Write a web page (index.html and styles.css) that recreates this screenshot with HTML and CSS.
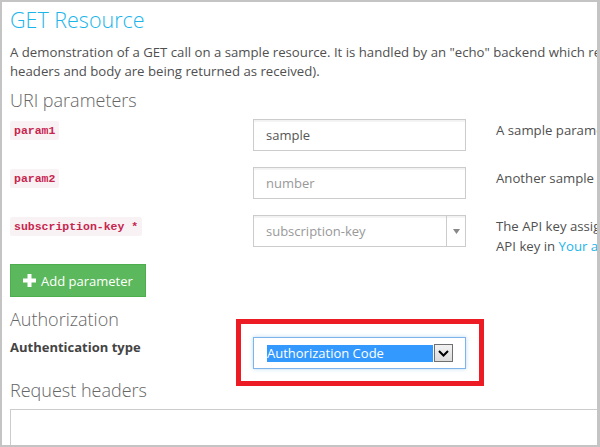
FILE: index.html
```html
<!DOCTYPE html>
<html>
<head>
<meta charset="utf-8">
<link rel="stylesheet" href="styles.css">
</head>
<body>
<div class="frame">
  <div class="content">
    <h1 class="title">GET Resource</h1>
    <p class="intro">A demonstration of a GET call on a sample resource. It is handled by an "echo" backend which returns a response equal to the request (the supplied<br>headers and body are being returned as received).</p>

    <h2 class="section uri-title">URI parameters</h2>
    <div class="params">
      <div class="label"><code>param1</code></div>
      <div class="field"><span class="value">sample</span></div>
      <div class="desc">A sample parameter that is required and has a default value of "sample".</div>

      <div class="label"><code>param2</code></div>
      <div class="field"><span class="placeholder">number</span></div>
      <div class="desc">Another sample parameter, set to not required.</div>

      <div class="label"><code>subscription-key *</code></div>
      <div class="field combo">
        <span class="placeholder">subscription-key</span>
        <span class="combo-btn"><svg width="7" height="5" viewBox="0 0 7 5"><path d="M0 0h7L3.5 5z" fill="#888"/></svg></span>
      </div>
      <div class="desc">The API key assigned to you for this subscription.<br>API key in <a class="link">Your account</a> page.</div>
    </div>

    <button class="add-btn"><svg class="plus" width="13" height="13" viewBox="0 0 13 13"><path d="M6.5 0v13M0 6.5h13" stroke="#fff" stroke-width="4"/></svg>Add parameter</button>

    <h2 class="section auth-title">Authorization</h2>
    <div class="auth-row">
      <div class="auth-label">Authentication type</div>
      <div class="auth-field">
        <div class="auth-select">
          <span class="selected">Authorization Code</span>
          <span class="drop"><svg width="11" height="7" viewBox="0 0 11 7"><path d="M1 1l4.5 4.5L10 1" fill="none" stroke="#000" stroke-width="2"/></svg></span>
        </div>
        <div class="highlight"></div>
      </div>
    </div>

    <h2 class="section headers-title">Request headers</h2>
    <div class="headers-box"></div>
  </div>
</div>
</body>
</html>
```
FILE: styles.css
```css
html, body {
  margin: 0;
  padding: 0;
  background: #fff;
}
.frame {
  width: 600px;
  height: 447px;
  box-sizing: border-box;
  border: 2px solid #c4c4c4;
  border-right-width: 3px;
  overflow: hidden;
  font-family: "Open Sans", "DejaVu Sans", sans-serif;
  color: #505050;
}
.content {
  width: 900px;
  padding: 0 0 0 8px;
}
.title {
  margin: 0;
  padding-top: 3px;
  font-size: 21.5px;
  line-height: 30px;
  font-weight: 300;
  color: #1cb5ea;
}
.intro {
  margin: 8px 0 0;
  font-size: 13.2px;
  line-height: 19px;
  white-space: nowrap;
}
.section {
  margin: 0;
  font-size: 18px;
  line-height: 26px;
  font-weight: 300;
  color: #666;
}
.uri-title {
  margin-top: 6px;
}
.params {
  display: grid;
  grid-template-columns: 213px 213px 1fr;
  column-gap: 30px;
  row-gap: 16px;
  margin-top: 6px;
}
.label {
  display: flex;
  align-items: flex-start;
  padding-top: 2px;
}
code {
  display: block;
  font-family: "Liberation Mono", "DejaVu Sans Mono", monospace;
  font-weight: bold;
  font-size: 11.5px;
  line-height: 19px;
  padding: 0 4px;
  color: #c7254e;
  background: #f9f2f4;
  border-radius: 2px;
}
.field {
  height: 32px;
  box-sizing: border-box;
  border: 1px solid #ccc;
  box-shadow: inset 0 2px 1px rgba(0,0,0,0.05);
  display: flex;
  align-items: center;
  padding: 0 12px;
  font-size: 13px;
}
.value { color: #555; }
.placeholder { color: #999; }
.combo {
  padding-right: 0;
}
.combo .placeholder { flex: 1; }
.combo-btn {
  width: 18px;
  align-self: stretch;
  border-left: 1px solid #ccc;
  display: flex;
  align-items: center;
  justify-content: center;
}
.desc {
  font-size: 13.2px;
  line-height: 20px;
  padding-top: 1px;
  white-space: nowrap;
}
.link { color: #1cb5ea; }
.add-btn {
  margin-top: 8px;
  display: flex;
  align-items: center;
  gap: 5px;
  height: 33px;
  width: 136px;
  box-sizing: border-box;
  padding: 0 0 0 12px;
  background: #5cb85c;
  border: 1px solid #4cae4c;
  color: #fff;
  font-family: "Open Sans", sans-serif;
  font-size: 13px;
  white-space: nowrap;
}
.plus { flex: none; }
.auth-title {
  margin-top: 9px;
}
.auth-row {
  display: grid;
  grid-template-columns: 213px 213px;
  column-gap: 30px;
  margin-top: 5px;
}
.auth-label {
  font-weight: bold;
  font-size: 13px;
  line-height: 18px;
  color: #444;
  padding-top: 1px;
}
.auth-field {
  position: relative;
}
.auth-select {
  height: 32px;
  box-sizing: border-box;
  border: 1px solid #7eb4ea;
  box-shadow: 0 0 4px rgba(102,175,233,0.45);
  display: flex;
  align-items: center;
  padding-left: 13px;
}
.selected {
  width: 166px;
  height: 17px;
  background: #3399ff;
  color: #fff;
  font-size: 13px;
  line-height: 17px;
  white-space: nowrap;
}
.drop {
  width: 19px;
  height: 18px;
  box-sizing: border-box;
  border: 1px solid #707070;
  background: linear-gradient(#f2f2f2, #dcdcdc);
  margin-left: 1px;
  display: flex;
  align-items: center;
  justify-content: center;
}
.highlight {
  position: absolute;
  left: -17px;
  top: -18px;
  right: -18px;
  bottom: -17px;
  border: 5px solid #ed1c24;
}
.headers-title {
  margin-top: 8px;
}
.headers-box {
  margin-top: 6px;
  height: 60px;
  border: 1px solid #ccc;
}
```
